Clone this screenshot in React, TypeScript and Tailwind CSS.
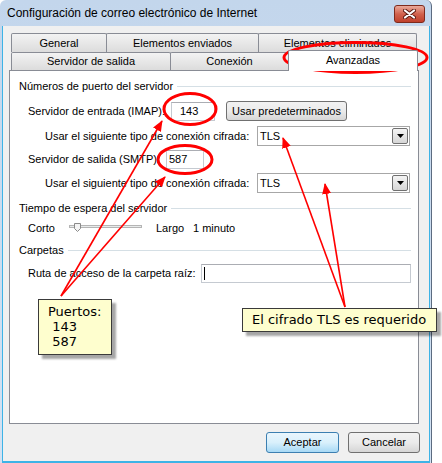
import React from 'react';

const ui = "font-['Liberation_Sans',Arial,sans-serif] text-[11px] text-black whitespace-nowrap";

function Tab({ label, w, selected = false }: { label: string; w: number; selected?: boolean }) {
  if (selected) {
    return (
      <div
        className="relative z-10 -mt-[2px] -ml-px flex h-[21px] items-center justify-center border-x border-t border-[#898c95] bg-white rounded-t-[2px] pb-[2px]"
        style={{ width: w }}
      >
        {label}
      </div>
    );
  }
  return (
    <div
      className="-ml-px first:ml-0 flex h-full items-center justify-center border-x border-t border-[#898c95] bg-gradient-to-b from-[#f3f3f3] to-[#dcdcdc] rounded-t-[2px]"
      style={{ width: w }}
    >
      {label}
    </div>
  );
}

function GroupHeader({ title }: { title: string }) {
  return (
    <div className="flex h-[16px] items-center gap-[4px]">
      <span>{title}</span>
      <div className="h-px flex-1 bg-[#d5dfe5]" />
    </div>
  );
}

function Combo({ value }: { value: string }) {
  return (
    <div className="flex h-[20px] w-[153px] items-center border border-[#a7a7a7] bg-white pl-[2px] pr-px">
      <span className="flex-1">{value}</span>
      <div className="flex h-[16px] w-[16px] items-center justify-center border border-[#707070] bg-gradient-to-b from-[#f4f4f4] to-[#d6d6d6] rounded-[2px]">
        <svg width="7" height="4" viewBox="0 0 7 4">
          <path d="M0 0H7L3.5 4Z" fill="#000" />
        </svg>
      </div>
    </div>
  );
}

function Slider() {
  return (
    <div className="relative h-[16px] w-[73px]">
      <div className="absolute left-0 right-0 top-[5px] h-[3px] border border-[#b5b5b5] bg-[#e7eaea]" />
      <svg className="absolute left-[5px] top-[3px]" width="7" height="9" viewBox="0 0 7 9">
        <path d="M0.5 0.5H6.5V5.5L3.5 8.5L0.5 5.5Z" fill="#f4f4f4" stroke="#8a8a8a" />
      </svg>
    </div>
  );
}

function Annotations() {
  return (
    <svg className="pointer-events-none absolute left-0 top-0" width="442" height="463" viewBox="0 0 442 463">
      <defs>
        <marker id="head" markerUnits="userSpaceOnUse" markerWidth="11" markerHeight="9" refX="10" refY="4.5" orient="auto">
          <path d="M0 0L11 4.5L0 9Z" fill="#ff0000" />
        </marker>
      </defs>
      <g fill="none" stroke="#ff0000" strokeWidth="3">
        <ellipse cx="355.5" cy="57.5" rx="71.5" ry="15" />
        <ellipse cx="190" cy="109" rx="26" ry="15.5" />
        <ellipse cx="185" cy="159.5" rx="27" ry="14" />
      </g>
      <g stroke="#ff0000" strokeWidth="1.6">
        <line x1="61" y1="296" x2="162" y2="121" markerEnd="url(#head)" />
        <line x1="61" y1="296" x2="165" y2="177" markerEnd="url(#head)" />
        <line x1="345" y1="307" x2="283" y2="138" markerEnd="url(#head)" />
        <line x1="345" y1="307" x2="325" y2="184" markerEnd="url(#head)" />
      </g>
    </svg>
  );
}

export default function App() {
  return (
    <div className={`relative h-[463px] w-[442px] bg-white ${ui}`}>
      {/* window frame */}
      <div className="flex h-[463px] w-[432px] flex-col rounded-t-[6px] border-r border-[#5c6b80] bg-gradient-to-b from-[#c3d6ec] to-[#d3e2f3]">
        <div className="flex h-[26px] items-start justify-between pl-[7px] pr-[6px]">
          <span className="mt-[6px] text-[12px] leading-[15px]">Configuración de correo electrónico de Internet</span>
          <div className="mt-[5px] flex h-[18px] w-[31px] items-center justify-center rounded-[3px] border border-[#7e2a1c] bg-gradient-to-b from-[#e9a99b] via-[#d1614c] to-[#c0402b]">
            <svg width="13" height="10" viewBox="0 0 13 10">
              <path d="M2 1.5L11 8.5M11 1.5L2 8.5" stroke="#5b1a10" strokeWidth="4" strokeLinecap="round" />
              <path d="M2 1.5L11 8.5M11 1.5L2 8.5" stroke="#ffffff" strokeWidth="2.2" strokeLinecap="round" />
            </svg>
          </div>
        </div>

        {/* dialog body */}
        <div className="ml-[2px] mr-px flex flex-1 flex-col border-x border-b-2 border-[#3db3e6] bg-[#f0f0f0] pt-[7px]">
          <div className="pl-[8px]">
            <div className="flex h-[19px]">
              <Tab label="General" w={96} />
              <Tab label="Elementos enviados" w={153} />
              <Tab label="Elementos eliminados" w={159} />
            </div>
            <div className="flex h-[18px] items-start">
              <Tab label="Servidor de salida" w={160} />
              <Tab label="Conexión" w={119} />
              <Tab label="Avanzadas" w={130} selected />
            </div>
          </div>

          <div className="ml-[6px] flex h-[354px] w-[410px] flex-col border border-[#898c95] bg-white pl-[9px] pr-[7px] pt-[7px]">
            <GroupHeader title="Números de puerto del servidor" />

            <div className="mt-[7px] flex h-[20px] items-center pl-[9px]">
              <span className="w-[143px]">Servidor de entrada (IMAP):</span>
              <div className="flex h-[19px] w-[44px] items-center border border-[#c5cad1] border-t-[#abadb3] pl-[8px]">143</div>
              <div className="ml-[11px] flex h-[20px] w-[121px] items-center justify-center rounded-[3px] border border-[#707070] bg-gradient-to-b from-[#f2f2f2] via-[#ebebeb] to-[#d6d6d6]">
                Usar predeterminados
              </div>
            </div>

            <div className="mt-[5px] flex h-[20px] items-center pl-[26px]">
              <span className="w-[212px]">Usar el siguiente tipo de conexión cifrada:</span>
              <Combo value="TLS" />
            </div>

            <div className="mt-[4px] flex h-[19px] items-center pl-[9px]">
              <span className="w-[138px]">Servidor de salida (SMTP):</span>
              <div className="flex h-[19px] w-[38px] items-center border border-[#c5cad1] border-t-[#abadb3] pl-[2px]">587</div>
            </div>

            <div className="mt-[4px] flex h-[20px] items-center pl-[26px]">
              <span className="w-[212px]">Usar el siguiente tipo de conexión cifrada:</span>
              <Combo value="TLS" />
            </div>

            <div className="mt-[7px]">
              <GroupHeader title="Tiempo de espera del servidor" />
            </div>

            <div className="mt-[4px] flex h-[16px] items-center pl-[9px]">
              <span className="w-[41px]">Corto</span>
              <Slider />
              <span className="ml-[14px] w-[37px]">Largo</span>
              <span>1 minuto</span>
            </div>

            <div className="mt-[6px]">
              <GroupHeader title="Carpetas" />
            </div>

            <div className="mt-[6px] flex h-[19px] items-center pl-[9px]">
              <span className="w-[173px]">Ruta de acceso de la carpeta raíz:</span>
              <div className="flex h-[19px] w-[210px] items-center border border-[#c5cad1] border-t-[#abadb3] pl-[2px]">
                <div className="h-[13px] w-px bg-black" />
              </div>
            </div>
          </div>

          <div className="mt-[8px] flex justify-end gap-[9px] pr-[9px]">
            <div className="flex h-[21px] w-[73px] items-center justify-center rounded-[3px] border border-[#3c7fb1] bg-gradient-to-b from-[#eaf6fd] via-[#d9f0fc] to-[#a7d9f5]">
              Aceptar
            </div>
            <div className="flex h-[21px] w-[72px] items-center justify-center rounded-[3px] border border-[#707070] bg-gradient-to-b from-[#f2f2f2] via-[#ebebeb] to-[#d6d6d6]">
              Cancelar
            </div>
          </div>
        </div>
      </div>

      <Annotations />

      {/* callout notes */}
      <div className="absolute left-[38px] top-[299px] h-[56px] w-[74px] whitespace-pre border border-[#3a3a3a] bg-[#fefece] pl-[9px] pt-[4px] font-['DejaVu_Sans',sans-serif] text-[13px] leading-[15px] shadow-[4px_4px_2px_rgba(0,0,0,0.35)]">
        {'Puertos:\n 143\n 587'}
      </div>
      <div className="absolute left-[242px] top-[308px] flex h-[24px] w-[195px] items-center border border-[#3a3a3a] bg-[#fefece] pl-[9px] font-['DejaVu_Sans',sans-serif] text-[13px] shadow-[4px_4px_2px_rgba(0,0,0,0.35)]">
        El cifrado TLS es requerido
      </div>
    </div>
  );
}
